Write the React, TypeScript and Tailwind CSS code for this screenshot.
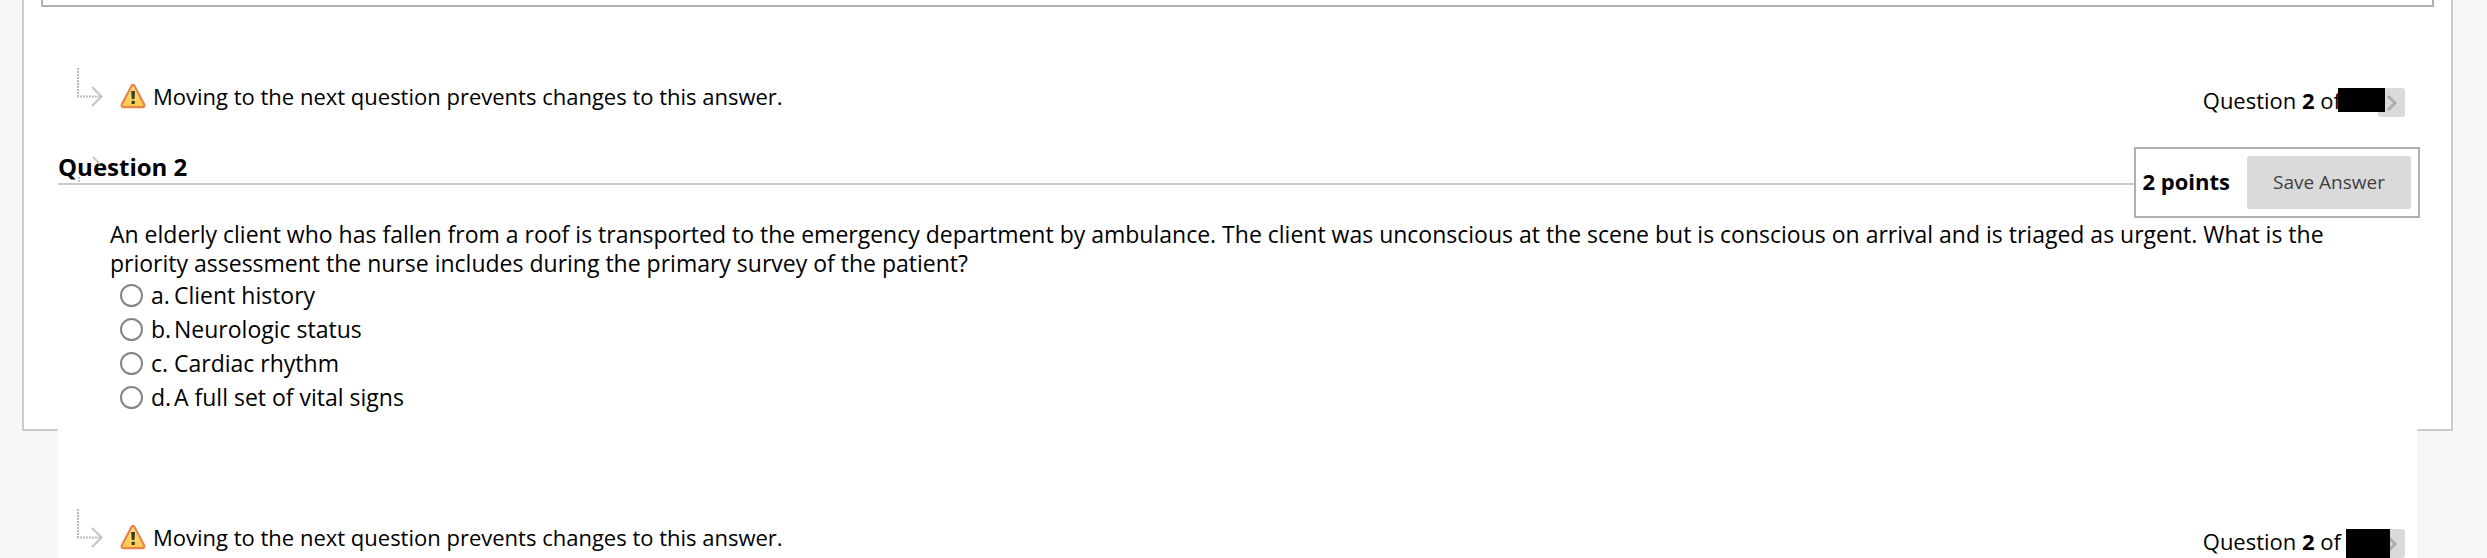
import React, { useState } from "react";

interface QuestionNavProps {
  maskClassName: string;
}

const options = [
  { key: "a", label: "Client history" },
  { key: "b", label: "Neurologic status" },
  { key: "c", label: "Cardiac rhythm" },
  { key: "d", label: "A full set of vital signs" },
];

const StepArrow = () => (
  <svg width="28" height="42" viewBox="0 0 28 42" fill="none" aria-hidden="true">
    <path d="M2 1V29" stroke="#bcbcbc" strokeWidth="2" strokeDasharray="2 1" />
    <path d="M1 29.5H24" stroke="#bcbcbc" strokeWidth="2" strokeDasharray="2 1" />
    <path d="M16 20L25.5 29.5L16 39" stroke="#c6c6c6" strokeWidth="2.2" />
  </svg>
);

const WarningIcon = () => (
  <svg width="26" height="26" viewBox="0 0 26 26" aria-hidden="true">
    <defs>
      <linearGradient id="warning-fill" x1="0" y1="0" x2="0" y2="1">
        <stop offset="0" stopColor="#fbe38c" />
        <stop offset="1" stopColor="#fbc748" />
      </linearGradient>
    </defs>
    <path
      d="M11.6 2.8Q13 0.8 14.4 2.8L24.2 21.4Q25 24.2 22.4 24.2H3.6Q1 24.2 1.8 21.4Z"
      fill="url(#warning-fill)"
      stroke="#e98450"
      strokeWidth="2.2"
      strokeLinejoin="round"
    />
    <path d="M11.2 8H15L14.5 16H11.8Z" fill="#3b3a24" />
    <rect x="11.6" y="17.8" width="3.2" height="3.2" rx="0.6" fill="#3b3a24" />
  </svg>
);

const QuestionNav = ({ maskClassName }: QuestionNavProps) => (
  <nav className="flex h-[50px] items-start justify-between pr-3 pl-[18px]" aria-label="Question navigation">
    <div className="flex items-start">
      <StepArrow />
      <div className="flex items-center gap-[7px] pt-[14px] pl-4">
        <WarningIcon />
        <p className="leading-[30px]">Moving to the next question prevents changes to this answer.</p>
      </div>
    </div>

    <div className="relative flex items-start pt-[21px]">
      <p className="-mt-1 mr-[37px] leading-8">
        Question <strong>2</strong> of
      </p>
      <button
        type="button"
        aria-label="Next question"
        className="flex h-[29px] w-[27px] items-center justify-center rounded-[3px] bg-[#dadada]"
      >
        <svg width="12" height="18" viewBox="0 0 12 18" fill="none">
          <path d="M2 2L9 9L2 16" stroke="#adadad" strokeWidth="3" />
        </svg>
      </button>
      <span className={maskClassName} />
    </div>
  </nav>
);

export default function App() {
  const [answer, setAnswer] = useState("");

  return (
    <div className="min-h-screen bg-[#f7f7f7] font-['Open_Sans',sans-serif] text-[22px] text-black">
      <main>
        <section className="mr-[34px] ml-[22px] border-x-2 border-b-2 border-[#cbcbcb] bg-white pb-[15px]">
          {/* Tail of the previous block */}
          <div className="mx-[17px] h-[7px] border-x-2 border-b-2 border-[#b0b0b0]" />

          <div className="mx-[34px] pt-[60px]">
            <QuestionNav maskClassName="absolute top-[21px] right-[20px] h-6 w-[47px] bg-black" />
          </div>

          <div className="relative mt-[30px] mr-[31px] ml-[34px] flex h-[71px] items-start">
            <h2 className="h-[38px] flex-1 border-b-2 border-[#cacaca] pt-1 text-2xl leading-8 font-bold">Question 2</h2>
            <div className="flex h-[71px] items-center gap-[17px] border-2 border-[#b0b0b0] px-[7px]">
              <strong className="pb-1 leading-8">2 points</strong>
              <button type="button" className="h-[53px] w-[164px] rounded-[3px] bg-[#dadada] text-[19px] text-[#3f3f3f]">
                Save Answer
              </button>
            </div>
            <svg className="absolute top-2 left-[18px]" width="28" height="30" viewBox="0 0 28 30" fill="none" aria-hidden="true">
              <path d="M3 22V28" stroke="#c8c8c8" strokeWidth="2" strokeDasharray="2 1" />
              <path d="M17 2L24 9" stroke="#c8c8c8" strokeWidth="2" />
            </svg>
          </div>

          <fieldset className="mt-[2px] mr-[90px] ml-[86px] text-[23px]">
            <legend className="leading-[29px]">
              An elderly client who has fallen from a roof is transported to the emergency department by ambulance. The
              client was unconscious at the scene but is conscious on arrival and is triaged as urgent. What is the
              priority assessment the nurse includes during the primary survey of the patient?
            </legend>
            {options.map((option) => (
              <label key={option.key} className="flex h-[34px] items-center pl-[10px]">
                <input
                  type="radio"
                  name="answer"
                  value={option.key}
                  checked={answer === option.key}
                  onChange={() => setAnswer(option.key)}
                  className="size-[23px] appearance-none rounded-full border-2 border-[#858585] bg-white checked:border-[7px] checked:border-blue-600"
                />
                <span className="ml-2 w-[23px]">{option.key}.</span>
                <span>{option.label}</span>
              </label>
            ))}
          </fieldset>
        </section>

        {/* Footer navigation overlaps the panel's lower border */}
        <div className="relative -mt-[2px] mr-[70px] ml-[58px] bg-white pt-[79px]">
          <QuestionNav maskClassName="absolute top-[21px] right-[15px] h-[29px] w-[44px] bg-black" />
        </div>
      </main>
    </div>
  );
}
